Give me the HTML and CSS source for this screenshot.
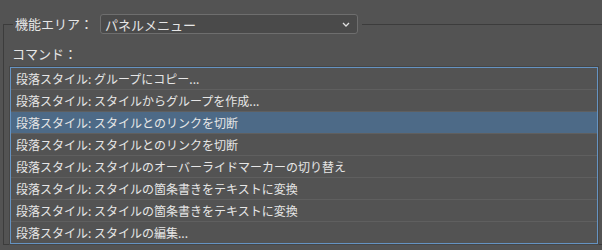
FILE: index.html
```html
<!DOCTYPE html>
<html lang="ja">
<head>
    <meta charset="UTF-8">
    <title>キーボードショートカット</title>
    <link rel="stylesheet" href="styles.css">
</head>
<body>
    <fieldset class="group">
        <legend class="area">
            <span class="area-label">機能エリア：</span>
            <div class="select">
                <span>パネルメニュー</span>
                <svg class="chevron" width="8" height="5" viewBox="0 0 8 5" fill="none" stroke="#e0e0e0" stroke-width="1.3">
                    <path d="M1 1l3 3 3-3"></path>
                </svg>
            </div>
        </legend>

        <div class="commands-label">コマンド：</div>

        <div class="commands">
            <div class="row">段落スタイル: グループにコピー...</div>
            <div class="row">段落スタイル: スタイルからグループを作成...</div>
            <div class="row selected">段落スタイル: スタイルとのリンクを切断</div>
            <div class="row">段落スタイル: スタイルとのリンクを切断</div>
            <div class="row">段落スタイル: スタイルのオーバーライドマーカーの切り替え</div>
            <div class="row">段落スタイル: スタイルの箇条書きをテキストに変換</div>
            <div class="row">段落スタイル: スタイルの箇条書きをテキストに変換</div>
            <div class="row">段落スタイル: スタイルの編集...</div>
        </div>
    </fieldset>
</body>
</html>
```

FILE: styles.css
```css
body {
    margin: 0;
    background-color: #535353;
    color: #e6e6e6;
    font-family: "Noto Sans CJK JP", "Noto Sans", sans-serif;
    font-size: 12px;
    overflow: hidden;
}

.group {
    margin: 14px 0 0 3px;
    padding: 0 0 0 6px;
    border: 1px solid #3c3c3c;
    border-right: none;
    min-width: 0;
}

.area {
    display: flex;
    align-items: center;
    margin-left: 3px;
    padding: 0 4px 0 2px;
}

.area-label {
    font-size: 13px;
    width: 85px;
    line-height: 20px;
}

.select {
    width: 245px;
    height: 18px;
    border: 1px solid #6e6e6e;
    border-radius: 3px;
    background-color: #4a4a4a;
    display: flex;
    align-items: center;
    justify-content: space-between;
    padding: 0 7px 0 4px;
    font-size: 13px;
}

.chevron {
    flex-shrink: 0;
}

.commands-label {
    font-size: 13px;
    line-height: 18px;
    margin: 11px 0 4px 2px;
}

.commands {
    width: 586px;
    border: 1px solid #6593c2;
    box-shadow: 0 0 0 1px #464646;
}

.row {
    height: 21px;
    line-height: 21px;
    padding-left: 5px;
    border-bottom: 1px solid #5f5f5f;
    white-space: nowrap;
}

.row:last-child {
    border-bottom: none;
}

.row.selected {
    background-color: #4d6a87;
}
```
